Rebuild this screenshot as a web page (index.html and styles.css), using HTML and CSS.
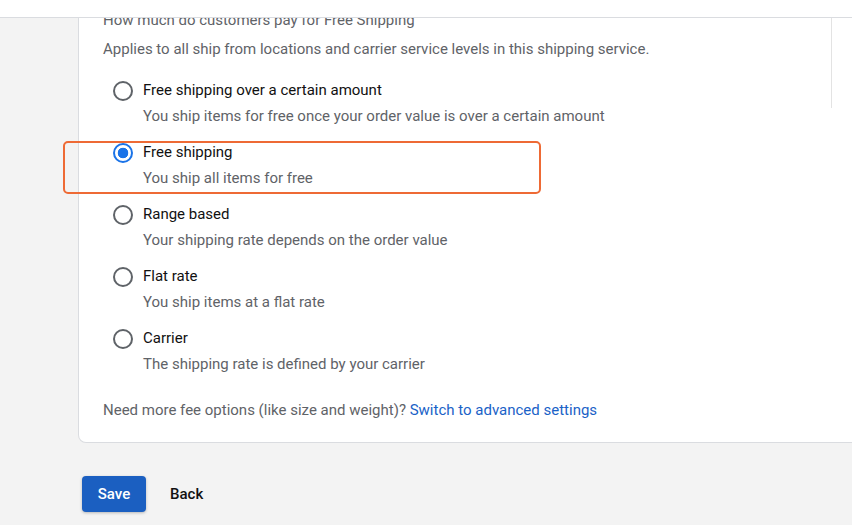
FILE: index.html
```html
<!DOCTYPE html>
<html lang="en">
<head>
    <meta charset="UTF-8">
    <meta name="viewport" content="width=device-width, initial-scale=1.0">
    <title>Free Shipping</title>
    <link rel="stylesheet" href="styles.css">
</head>
<body>

    <div class="topbar"></div>

    <div class="page">
        <div class="card">
            <div class="scroll-edge"></div>

            <p class="question">How much do customers pay for Free Shipping</p>
            <p class="hint">Applies to all ship from locations and carrier service levels in this shipping service.</p>

            <div class="options">
                <label class="option">
                    <input type="radio" name="rate" class="radio">
                    <span class="option-text">
                        <span class="option-title">Free shipping over a certain amount</span>
                        <span class="option-desc">You ship items for free once your order value is over a certain amount</span>
                    </span>
                </label>

                <label class="option selected">
                    <input type="radio" name="rate" class="radio" checked>
                    <span class="option-text">
                        <span class="option-title">Free shipping</span>
                        <span class="option-desc">You ship all items for free</span>
                    </span>
                    <span class="highlight"></span>
                </label>

                <label class="option">
                    <input type="radio" name="rate" class="radio">
                    <span class="option-text">
                        <span class="option-title">Range based</span>
                        <span class="option-desc">Your shipping rate depends on the order value</span>
                    </span>
                </label>

                <label class="option">
                    <input type="radio" name="rate" class="radio">
                    <span class="option-text">
                        <span class="option-title">Flat rate</span>
                        <span class="option-desc">You ship items at a flat rate</span>
                    </span>
                </label>

                <label class="option">
                    <input type="radio" name="rate" class="radio">
                    <span class="option-text">
                        <span class="option-title">Carrier</span>
                        <span class="option-desc">The shipping rate is defined by your carrier</span>
                    </span>
                </label>
            </div>

            <p class="more">Need more fee options (like size and weight)? <a href="#" class="link">Switch to advanced settings</a></p>
        </div>

        <div class="actions">
            <button class="button">Save</button>
            <a href="#" class="back">Back</a>
        </div>
    </div>

</body>
</html>
```

FILE: styles.css
```css
body {
    font-family: Roboto, "Liberation Sans", sans-serif;
    background-color: #f3f3f3;
    margin: 0;
    padding: 0;
    color: #202124;
    overflow: hidden;
}

.topbar {
    position: fixed;
    top: 0;
    left: 0;
    right: 0;
    height: 17px;
    background: white;
    border-bottom: 1px solid #dadce0;
    z-index: 5;
}

.page {
    padding: 0 0 8px 0;
}

.card {
    position: relative;
    margin-left: 78px;
    margin-right: -10px;
    background: white;
    border: 1px solid #dadce0;
    border-top: none;
    border-radius: 0 0 8px 8px;
    padding: 10px 0 22px 24px;
}

.scroll-edge {
    position: absolute;
    top: 0;
    left: 752px;
    width: 1px;
    height: 108px;
    background: #e3e3e3;
}

.question,
.hint,
.more {
    margin: 0;
    font-size: 15px;
    line-height: 20px;
    color: #5f6368;
}

.hint {
    margin-top: 9px;
}

.options {
    margin: 21px 0 0 10px;
}

.option {
    position: relative;
    display: flex;
    gap: 10px;
    margin-bottom: 16px;
    cursor: pointer;
}

.radio {
    appearance: none;
    -webkit-appearance: none;
    width: 20px;
    height: 20px;
    margin: 1px 0 0 0;
    border: 2px solid #5f6368;
    border-radius: 50%;
    box-sizing: border-box;
    flex-shrink: 0;
    background: white;
}

.radio:checked {
    border-color: #1a73e8;
    background: radial-gradient(circle, #1a73e8 0, #1a73e8 5px, white 5.6px);
}

.option-text {
    display: flex;
    flex-direction: column;
    gap: 6px;
}

.option-title {
    font-size: 15px;
    line-height: 20px;
    color: #111;
}

.option-desc {
    font-size: 15px;
    line-height: 20px;
    color: #5f6368;
}

.highlight {
    position: absolute;
    top: -1px;
    left: -50px;
    width: 478px;
    height: 53px;
    border: 2px solid #ee6a35;
    border-radius: 5px;
    box-sizing: border-box;
    pointer-events: none;
}

.more {
    margin-top: 26px;
}

.link {
    color: #1a62c7;
    text-decoration: none;
}

.actions {
    display: flex;
    align-items: center;
    gap: 24px;
    margin: 33px 0 0 82px;
}

.button {
    background: #1b5fc1;
    color: white;
    border: none;
    border-radius: 4px;
    width: 64px;
    height: 36px;
    font-family: inherit;
    font-size: 15px;
    font-weight: 500;
    box-shadow: 0px 1px 3px rgba(0, 0, 0, 0.25);
    cursor: pointer;
}

.back {
    color: #111;
    font-size: 15px;
    font-weight: 500;
    text-decoration: none;
}
```
